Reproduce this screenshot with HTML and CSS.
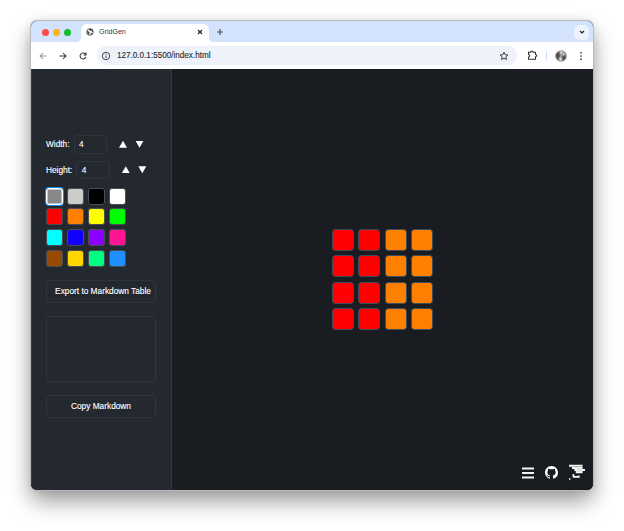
FILE: index.html
```
<!DOCTYPE html>
<html lang="en">
<head>
<meta charset="utf-8">
<title>GridGen</title>
<link rel="stylesheet" href="styles.css">
</head>
<body>
<div class="window">
  <header class="tabs">
    <span class="light close"></span><span class="light minimize"></span><span class="light expand"></span>
    <div class="tab">
      <svg class="globe" viewBox="0 0 24 24"><circle cx="12" cy="12" r="10" fill="#fff" stroke="#42474d" stroke-width="2.5"/><path d="M3 9l5 1 3 4-2 3 1 5-5-4zM9 2l1 5 4 2 3-1 2 4 3-1-3-6-5-3zM14 14l5 1-3 5-3-2z" fill="#42474d"/></svg>
      <span class="title">GridGen</span>
      <svg class="x" viewBox="0 0 8 8"><path d="M2 2l4 4m0-4l-4 4" stroke="#202124" stroke-width="1.1"/></svg>
    </div>
    <svg class="plus" viewBox="0 0 8 8"><path d="M4 1v6M1 4h6" stroke="#3c4658" stroke-width="1.1"/></svg>
    <div class="chevron"><svg viewBox="0 0 8 8"><path d="M2 3l2 2 2-2" fill="none" stroke="#202124" stroke-width="1.2"/></svg></div>
  </header>
  <nav class="toolbar">
    <svg class="nav back" viewBox="0 0 10 10"><path d="M8.5 5H2m3-3L2 5l3 3" /></svg>
    <svg class="nav" viewBox="0 0 10 10"><path d="M1.5 5H8M5 2l3 3-3 3" /></svg>
    <svg class="nav" viewBox="0 0 10 10"><path d="M7.9 6A3 3 0 1 1 7.2 2.9L8 3.7M8 1.5v2.4H5.6"/></svg>
    <div class="address">
      <svg class="info" viewBox="0 0 10 10"><circle cx="5" cy="5" r="3.7"/><path d="M5 4.6V7M5 2.8v.9"/></svg>
      <span class="url">127.0.0.1:5500/index.html</span>
      <svg class="star" viewBox="0 0 10 10"><path d="M5 1.2l1.1 2.5 2.8.3-2.1 1.8.7 2.8L5 7.1 2.5 8.6l.7-2.8L1.1 4l2.8-.3z"/></svg>
    </div>
    <svg class="puzzle" viewBox="0 0 11 11"><path d="M1.5 2.2h2.2a1.2 1.2 0 0 1 2.4 0h2.4v2.2a1.2 1.2 0 0 1 0 2.4v2.4h-7V6.9a1.2 1.2 0 0 0 0-2.4z"/></svg>
    <span class="divider"></span>
    <svg class="avatar" viewBox="0 0 12 12"><circle cx="6" cy="6" r="5.8" fill="#929292"/><path d="M1 4l3-2 1 4-2 4-2-3zM7 7l3-2 1 3-3 3z" fill="#555"/><path d="M5 1l3 1-2 3zM4 8l2-1 1 3-2 1zM8 3l2 1-2 2z" fill="#d5d5d5"/></svg>
    <svg class="dots" viewBox="0 0 4 10"><circle cx="2" cy="1.8" r=".85"/><circle cx="2" cy="5" r=".85"/><circle cx="2" cy="8.2" r=".85"/></svg>
  </nav>
  <div class="page">
    <aside class="sidebar">
      <div class="size-row"><label>Width:</label><span class="number">4</span><span class="arrow up"></span><span class="arrow down"></span></div>
      <div class="size-row"><label>Height:</label><span class="number">4</span><span class="arrow up"></span><span class="arrow down"></span></div>
      <div class="palette">
        <i class="gray selected"></i><i class="silver"></i><i class="black"></i><i class="white"></i>
        <i class="red"></i><i class="orange"></i><i class="yellow"></i><i class="lime"></i>
        <i class="cyan"></i><i class="blue"></i><i class="purple"></i><i class="pink"></i>
        <i class="brown"></i><i class="gold"></i><i class="spring"></i><i class="sky"></i>
      </div>
      <button class="export">Export to Markdown Table</button>
      <div class="output"></div>
      <button>Copy Markdown</button>
    </aside>
    <main class="canvas">
      <div class="grid">
        <i class="red"></i><i class="red"></i><i class="orange"></i><i class="orange"></i>
        <i class="red"></i><i class="red"></i><i class="orange"></i><i class="orange"></i>
        <i class="red"></i><i class="red"></i><i class="orange"></i><i class="orange"></i>
        <i class="red"></i><i class="red"></i><i class="orange"></i><i class="orange"></i>
      </div>
      <div class="links">
        <svg class="menu" viewBox="0 0 12 12"><path d="M0 1.5h12M0 6h12M0 10.5h12" stroke="#f4f4f5" stroke-width="1.8"/></svg>
        <svg class="github" viewBox="0 0 16 16"><path fill="#fff" d="M8 0C3.58 0 0 3.58 0 8c0 3.54 2.29 6.53 5.47 7.59.4.07.55-.17.55-.38 0-.19-.01-.82-.01-1.49-2.01.37-2.53-.49-2.69-.94-.09-.23-.48-.94-.82-1.13-.28-.15-.68-.52-.01-.53.63-.01 1.08.58 1.23.82.72 1.21 1.87.87 2.33.66.07-.52.28-.87.51-1.07-1.78-.2-3.64-.89-3.64-3.95 0-.87.31-1.59.82-2.15-.08-.2-.36-1.02.08-2.12 0 0 .67-.21 2.2.82.64-.18 1.32-.27 2-.27s1.36.09 2 .27c1.53-1.04 2.2-.82 2.2-.82.44 1.1.16 1.92.08 2.12.51.56.82 1.27.82 2.15 0 3.07-1.87 3.75-3.65 3.95.29.25.54.73.54 1.48 0 1.07-.01 1.93-.01 2.2 0 .21.15.46.55.38A8.01 8.01 0 0 0 16 8c0-4.42-3.58-8-8-8z"/></svg>
        <svg class="logo" viewBox="0 0 17 17"><g fill="#f5f5f5"><path d="M0 .5h14v2H0zM3 2.8h11v2.2H3zM5.5 5h11v2H5.5zM7 7h7v2.3H7zM3.5 10.3h2v2h-2zM4 12h7v2H4zM9 11.5h2v2H9zM0 14.5h1.5V16H0z"/></g><path d="M5 2.6h7M9 4.9h4M8 7h5" stroke="#a0a2a4" stroke-width=".5"/></svg>
      </div>
    </main>
  </div>
</div>
</body>
</html>
```
FILE: styles.css
```
* { box-sizing: border-box; }
body {
  margin: 0;
  width: 624px;
  height: 531px;
  padding: 21px 31px 41px;
  background: #fff;
  overflow: hidden;
  font: 8.3px "Liberation Sans", Arial, sans-serif;
}
svg { display: block; flex: none; }
.window {
  width: 562px;
  height: 469px;
  border-radius: 6px;
  overflow: hidden;
  background: #191c20;
  box-shadow: 0 0 0 1px #b9babb, 0 11px 22px rgba(0, 0, 0, .4), 0 0 10px rgba(0, 0, 0, .1);
}
.tabs {
  height: 21px;
  background: #d3e3fd;
  display: flex;
  align-items: center;
  padding-left: 11px;
}
.light { width: 7px; height: 7px; margin: 1px 4px 0 0; border-radius: 50%; }
.close { background: #fe4b46; }
.minimize { background: #fdb50f; }
.expand { background: #13bd2b; }
.tab {
  position: relative;
  width: 128px;
  height: 18px;
  margin: 3px 0 0 6px;
  padding: 0 5px 3px;
  border-radius: 6px 6px 0 0;
  background: #fff;
  display: flex;
  align-items: center;
}
.tab::before, .tab::after {
  content: "";
  position: absolute;
  bottom: 0;
  width: 5px;
  height: 5px;
}
.tab::before { left: -5px; background: radial-gradient(circle at 0 0, transparent 5px, #fff 5.3px); }
.tab::after { right: -5px; background: radial-gradient(circle at 100% 0, transparent 5px, #fff 5.3px); }
.globe { width: 8px; height: 8px; }
.title { margin-left: 5px; font-size: 7.1px; color: #34373a; }
.x { width: 8px; height: 8px; margin-left: auto; }
.plus { width: 8px; height: 8px; margin: 1px 0 0 7px; }
.chevron {
  width: 15px;
  height: 15px;
  margin: 1px 4px 0 auto;
  border-radius: 5px;
  background: #edf3fe;
  display: grid;
  place-items: center;
}
.chevron svg { width: 8px; height: 8px; }
.toolbar {
  height: 27px;
  padding: 0 10px 0 7px;
  background: #fff;
  display: flex;
  align-items: center;
}
.nav { width: 10px; height: 10px; margin-right: 10px; }
.nav path, .info, .star, .puzzle { fill: none; stroke: #303236; stroke-width: 1.05; }
.back path { stroke: #93979d; }
.address {
  width: 420px;
  height: 19px;
  margin-left: -1px;
  padding: 0 8px 0 4px;
  border-radius: 9.5px;
  background: #edf2fb;
  display: flex;
  align-items: center;
}
.info, .star { width: 10px; height: 10px; }
.info { stroke-width: .9; }
.url { margin-left: 6px; font-size: 8.15px; color: #282b30; -webkit-text-stroke: .12px; white-space: nowrap; }
.star { margin-left: auto; stroke-width: .9; }
.puzzle { width: 11px; height: 11px; margin-left: 10px; }
.divider { width: 1px; height: 9px; margin-left: 8px; background: #c9dffb; }
.avatar { width: 12px; height: 12px; margin-left: 8px; }
.dots { width: 4px; height: 10px; margin-left: auto; fill: #303236; }
.page { height: 421px; display: flex; }
.sidebar {
  width: 141px;
  padding: 66px 15px 0 14px;
  background: #24282f;
  border-right: 1px solid #31353b;
  border-left: 1px solid #343a40;
  color: #fff;
  -webkit-text-stroke: .12px #fff;
}
.size-row { height: 18.5px; margin-bottom: 7px; display: flex; align-items: center; }
.number {
  width: 33.5px;
  height: 18.5px;
  margin-left: 4px;
  padding-left: 4.5px;
  border: 1px solid #2f343b;
  border-radius: 3px;
  line-height: 17px;
}
.arrow { width: 8px; height: 7px; background: #fff; }
.up { margin-left: 12px; clip-path: polygon(50% 0, 100% 100%, 0 100%); }
.down { margin-left: 8.5px; clip-path: polygon(0 0, 100% 0, 50% 100%); }
.palette {
  display: grid;
  grid-template-columns: repeat(4, 17px);
  gap: 3.85px;
  margin: 8.5px 0 0 .4px;
}
.palette i { height: 17px; border: 1px solid #484e57; border-radius: 3px; }
.palette .selected { border-color: #fff; box-shadow: inset 0 0 0 .5px #fff, 0 0 0 1px #1687dc; }
.gray { background: #888; }
.silver { background: #ccc; }
.black { background: #000; }
.white { background: #fff; }
.red { background: #f00; }
.orange { background: #ff8000; }
.yellow { background: #ff0; }
.lime { background: #0f0; }
.cyan { background: #0ff; }
.blue { background: #1200ff; }
.purple { background: #8b00ff; }
.pink { background: #ff1493; }
.brown { background: #964b00; }
.gold { background: gold; }
.spring { background: #00ff80; }
.sky { background: #1e90ff; }
button, .output {
  display: block;
  width: 110px;
  border: 1px solid #30353c;
  border-radius: 3px;
  background: #24282f;
}
button {
  height: 23px;
  padding: 0;
  color: #fff;
  font: inherit;
  white-space: nowrap;
}
.export { margin-top: 12.5px; padding-left: 4px; }
.output { height: 66px; margin: 13px 0; }
.canvas {
  flex: 1;
  padding: 160px 8px 9px;
  background: #191c20;
  display: flex;
  flex-direction: column;
  justify-content: space-between;
}
.grid {
  display: grid;
  grid-template-columns: repeat(4, 22px);
  gap: 4.4px;
  justify-content: center;
}
.grid i { height: 22px; border: 1px solid #3b4d5b; border-radius: 3.5px; }
.links { display: flex; align-items: center; justify-content: flex-end; }
.menu { width: 12px; height: 12px; }
.github { width: 13px; height: 13px; margin-left: 10.5px; }
.logo { width: 16.5px; height: 17px; margin-left: 11px; }
```
